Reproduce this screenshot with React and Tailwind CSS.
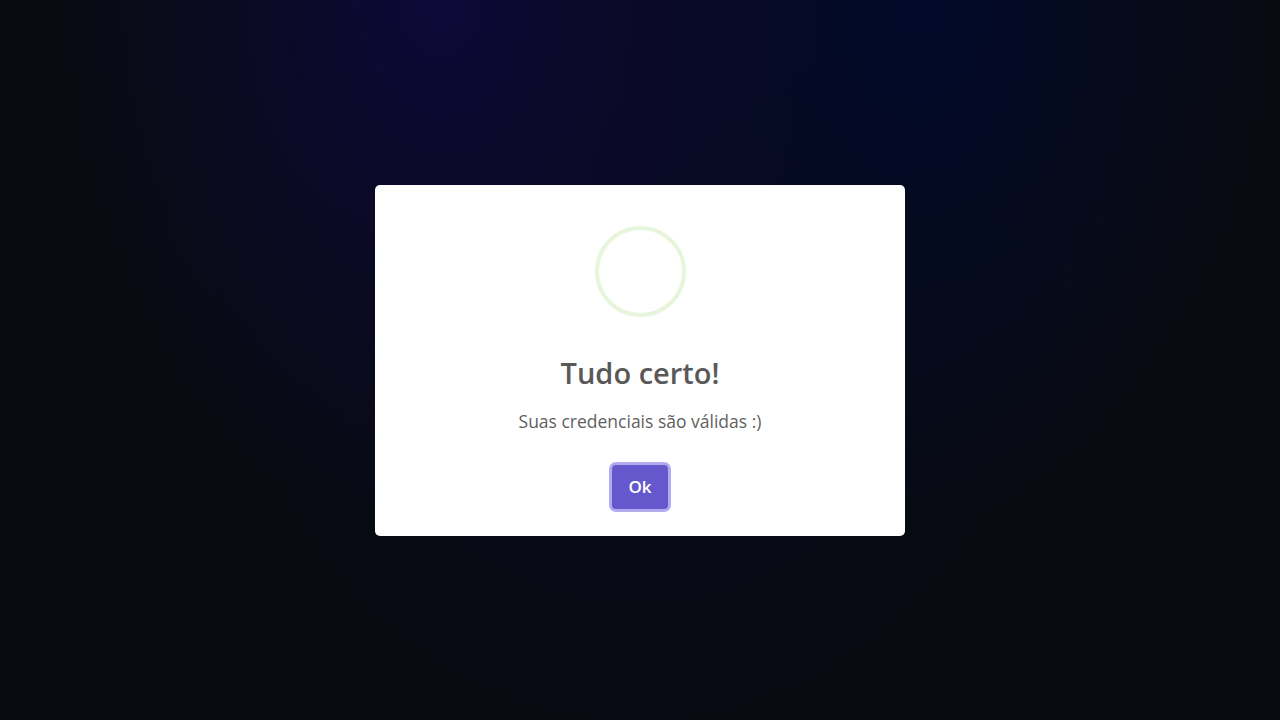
export default function App() {
  return (
    <div className="relative w-full h-[720px] overflow-hidden bg-[#090b10] font-['Open_Sans',sans-serif] bg-[radial-gradient(ellipse_400px_520px_at_440px_0px,#0e0838_0%,rgba(14,8,56,0.5)_45%,rgba(9,11,16,0)_100%),radial-gradient(ellipse_380px_520px_at_920px_0px,#020a2c_0%,rgba(2,10,44,0.5)_45%,rgba(9,11,16,0)_100%),radial-gradient(ellipse_520px_520px_at_640px_330px,#070a1a_0%,rgba(9,11,16,0)_100%)]">
      <div className="flex h-full items-center justify-center pt-[1px]">
        <div className="flex w-[530px] h-[351px] flex-col items-center rounded-[5px] bg-white pt-[41px]">
          <div className="h-[91px] w-[91px] rounded-full border-4 border-[#e7f5dd]" />
          <h2 className="mt-[38px] text-[29px] leading-[36px] font-semibold text-[#595959]">Tudo certo!</h2>
          <p className="mt-[17px] text-[17.5px] leading-[27px] text-[#5f5f5f]">Suas credenciais são válidas :)</p>
          <button className="mt-[30px] flex h-[44px] w-[56px] items-center justify-center rounded-[4px] bg-[#6558cc] text-[17px] font-semibold text-white ring-3 ring-[#b3aaf0]">
            Ok
          </button>
        </div>
      </div>
    </div>
  )
}
